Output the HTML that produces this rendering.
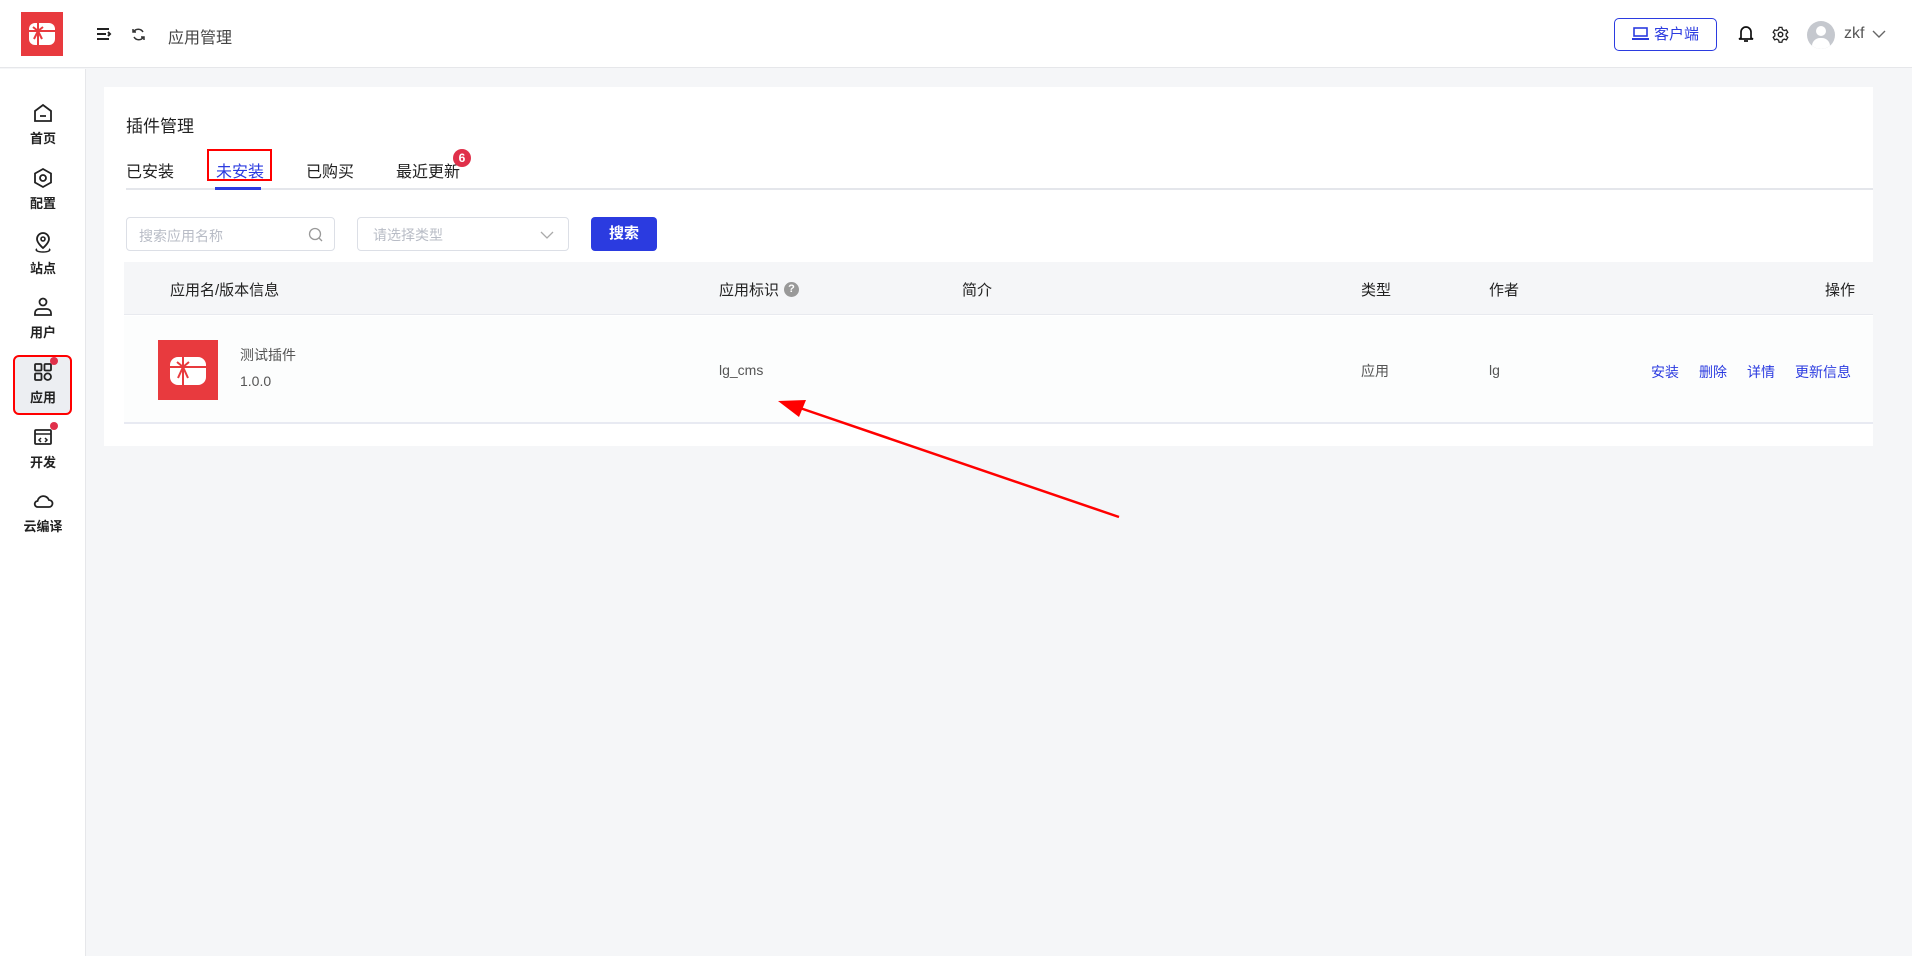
<!DOCTYPE html>
<html><head><meta charset="utf-8"><style>
*{box-sizing:border-box;margin:0;padding:0}
body{width:1912px;height:956px;background:#f5f6f8;font-family:"Liberation Sans","Noto Sans CJK SC",sans-serif;color:#333;position:relative;overflow:hidden}
.abs{position:absolute}
.hdr{left:0;top:0;width:1912px;height:68px;background:#fff;border-bottom:1px solid #e6e7ea}
.side{left:0;top:69px;width:86px;height:887px;background:#fff;border-right:1px solid #e6e7ea}
.si{position:absolute;left:0;width:86px;text-align:center;font-size:13px;font-weight:bold;color:#222}
.si svg{display:block;margin:0 auto 4px}
.card{left:104px;top:87px;width:1769px;height:359px;background:#fff}
.t{position:absolute;white-space:nowrap}
.link{color:#2b3be0;font-size:14px}
</style></head><body>
<div class="abs hdr"></div>
<div class="abs" style="left:21px;top:12px;width:42px;height:44px;background:#e83a3e">
<svg width="42" height="44" viewBox="0 0 42 44"><rect x="8" y="11" width="26" height="22" rx="6" fill="#fff"/><path d="M8 19H34M17 11V33M12 15l5 4 5-4M17 19l-4 8M17 19l4 8" stroke="#e83a3e" stroke-width="2" fill="none"/></svg></div>
<svg class="abs" style="left:96px;top:27px" width="16" height="14"><path d="M1 2h12M1 7h9M1 12h12M12 5l2 2-2 2" stroke="#222" stroke-width="2" fill="none"/></svg>
<svg class="abs" style="left:131px;top:27px" width="15" height="15" viewBox="0 0 15 15"><path d="M12 5A5.5 5.5 0 0 0 2.5 5M3 10a5.5 5.5 0 0 0 9.5 0M2 2v3h3M13 13v-3h-3" stroke="#333" stroke-width="1.5" fill="none"/></svg>
<div class="t" style="left:168px;top:24px;font-size:16px;color:#444">应用管理</div>
<div class="abs" style="left:1614px;top:18px;width:103px;height:33px;border:1px solid #2b3be0;border-radius:5px;color:#2b3be0;font-size:15px;line-height:31px;text-align:center">
<svg width="17" height="13" style="vertical-align:-1px;margin-right:5px"><rect x="2" y="1" width="13" height="8" fill="none" stroke="#2b3be0" stroke-width="1.6"/><path d="M0 12h17" stroke="#2b3be0" stroke-width="2"/></svg>客户端</div>
<svg class="abs" style="left:1737px;top:24px" width="18" height="20" viewBox="0 0 18 20"><path d="M4 14V8a5 5 0 0 1 10 0v6l2 1H2zM7 17h4" stroke="#111" stroke-width="1.7" fill="none"/></svg>
<svg class="abs" style="left:1772px;top:26px" width="17" height="17" viewBox="0 0 24 24"><circle cx="12" cy="12" r="3.2" fill="none" stroke="#222" stroke-width="2"/><path d="M10 2h4l.7 3 2.6 1.5 3-1 2 3.5-2.3 2v3l2.3 2-2 3.5-3-1-2.6 1.5-.7 3h-4l-.7-3-2.6-1.5-3 1-2-3.5 2.3-2v-3l-2.3-2 2-3.5 3 1L9.3 5z" fill="none" stroke="#222" stroke-width="1.8"/></svg>
<div class="abs" style="left:1807px;top:21px;width:28px;height:28px;border-radius:50%;background:#c5c8ce;overflow:hidden"><div class="abs" style="left:9px;top:5px;width:10px;height:10px;border-radius:50%;background:#fff"></div><div class="abs" style="left:5px;top:17px;width:18px;height:14px;border-radius:8px 8px 0 0;background:#fff"></div></div>
<div class="t" style="left:1844px;top:25px;font-size:16px;color:#555">zkf</div>
<svg class="abs" style="left:1872px;top:30px" width="14" height="9"><path d="M1 1l6 6 6-6" stroke="#666" stroke-width="1.4" fill="none"/></svg>

<div class="abs side"></div>
<div class="si" style="top:102px"><svg width="22" height="22" viewBox="0 0 22 22"><path d="M3 9l8-6 8 6v10H3zM8 14h6" fill="none" stroke="#222" stroke-width="1.8"/></svg>首页</div>
<div class="si" style="top:167px"><svg width="22" height="22" viewBox="0 0 22 22"><path d="M11 2l8 4.5v9L11 20l-8-4.5v-9z" fill="none" stroke="#222" stroke-width="1.8"/><circle cx="11" cy="11" r="3" fill="none" stroke="#222" stroke-width="1.8"/></svg>配置</div>
<div class="si" style="top:232px"><svg width="22" height="22" viewBox="0 0 22 22"><path d="M11 16s-6-5-6-9a6 6 0 0 1 12 0c0 4-6 9-6 9z" fill="none" stroke="#222" stroke-width="1.8"/><circle cx="11" cy="7" r="2" fill="none" stroke="#222" stroke-width="1.6"/><path d="M5 17c-2 1 0 3 6 3s8-2 6-3" fill="none" stroke="#222" stroke-width="1.6"/></svg>站点</div>
<div class="si" style="top:296px"><svg width="22" height="22" viewBox="0 0 22 22"><circle cx="11" cy="6" r="3.5" fill="none" stroke="#222" stroke-width="1.8"/><path d="M3 19v-2a4 4 0 0 1 4-4h8a4 4 0 0 1 4 4v2z" fill="none" stroke="#222" stroke-width="1.8"/></svg>用户</div>
<div class="abs" style="left:13px;top:355px;width:59px;height:60px;background:#eceef2;border-radius:6px;border:2px solid #f00"></div>
<div class="si" style="top:361px"><svg width="22" height="22" viewBox="0 0 22 22"><rect x="3" y="3" width="6.5" height="6.5" rx="1" fill="none" stroke="#222" stroke-width="1.8"/><rect x="12.5" y="3" width="6.5" height="6.5" rx="1" fill="none" stroke="#222" stroke-width="1.8"/><rect x="3" y="12.5" width="6.5" height="6.5" rx="1" fill="none" stroke="#222" stroke-width="1.8"/><circle cx="15.7" cy="15.7" r="3.3" fill="none" stroke="#222" stroke-width="1.8"/></svg>应用</div>
<div class="abs" style="left:50px;top:357px;width:8px;height:8px;border-radius:50%;background:#e0304a"></div>
<div class="si" style="top:426px"><svg width="22" height="22" viewBox="0 0 22 22"><rect x="3" y="4" width="16" height="14" rx="1" fill="none" stroke="#222" stroke-width="1.8"/><path d="M3 8h16M9 12l-2 2 2 2M13 12l2 2-2 2" fill="none" stroke="#222" stroke-width="1.5"/></svg>开发</div>
<div class="abs" style="left:50px;top:422px;width:8px;height:8px;border-radius:50%;background:#e0304a"></div>
<div class="si" style="top:490px"><svg width="22" height="22" viewBox="0 0 22 22"><path d="M6 17h11a3.5 3.5 0 0 0 0-7 6 6 0 0 0-11.5 1A3 3 0 0 0 6 17z" fill="none" stroke="#222" stroke-width="1.8"/></svg>云编译</div>

<div class="abs card"></div>
<div class="t" style="left:126px;top:112px;font-size:17px;color:#222">插件管理</div>
<div class="t" style="left:126px;top:158px;font-size:16px;color:#222">已安装</div>
<div class="t" style="left:216px;top:158px;font-size:16px;color:#2b3be0">未安装</div>
<div class="t" style="left:306px;top:158px;font-size:16px;color:#222">已购买</div>
<div class="t" style="left:396px;top:158px;font-size:16px;color:#222">最近更新</div>
<div class="abs" style="left:453px;top:149px;width:18px;height:18px;border-radius:50%;background:#e0304a;color:#fff;font-size:12px;font-weight:bold;text-align:center;line-height:18px">6</div>
<div class="abs" style="left:126px;top:188px;width:1747px;height:2px;background:#e4e6eb"></div>
<div class="abs" style="left:215px;top:187px;width:46px;height:3px;background:#2b3be0"></div>
<div class="abs" style="left:207px;top:149px;width:65px;height:32px;border:2px solid #f00"></div>

<div class="abs" style="left:126px;top:217px;width:209px;height:34px;border:1px solid #dcdfe6;border-radius:4px"></div>
<div class="t" style="left:139px;top:226px;font-size:14px;color:#b8bcc6">搜索应用名称</div>
<svg class="abs" style="left:308px;top:227px" width="16" height="16"><circle cx="7" cy="7" r="5.5" fill="none" stroke="#999" stroke-width="1.3"/><path d="M11 11l3 3" stroke="#999" stroke-width="1.3"/></svg>
<div class="abs" style="left:357px;top:217px;width:212px;height:34px;border:1px solid #dcdfe6;border-radius:4px"></div>
<div class="t" style="left:373px;top:225px;font-size:14px;color:#b8bcc6">请选择类型</div>
<svg class="abs" style="left:540px;top:231px" width="14" height="9"><path d="M1 1l6 6 6-6" stroke="#aaa" stroke-width="1.3" fill="none"/></svg>
<div class="abs" style="left:591px;top:217px;width:66px;height:34px;background:#2b3be0;border-radius:4px;color:#fff;font-size:15px;font-weight:bold;text-align:center;line-height:34px">搜索</div>

<div class="abs" style="left:124px;top:262px;width:1749px;height:53px;background:#f5f6f8;border-bottom:1px solid #e8eaef"></div>
<div class="t" style="left:170px;top:279px;font-size:15px;color:#222">应用名/版本信息</div>
<div class="t" style="left:719px;top:279px;font-size:15px;color:#222">应用标识</div>
<div class="abs" style="left:784px;top:282px;width:15px;height:15px;border-radius:50%;background:#999;color:#fff;font-size:11px;font-weight:bold;text-align:center;line-height:15px">?</div>
<div class="t" style="left:962px;top:279px;font-size:15px;color:#222">简介</div>
<div class="t" style="left:1361px;top:279px;font-size:15px;color:#222">类型</div>
<div class="t" style="left:1489px;top:279px;font-size:15px;color:#222">作者</div>
<div class="t" style="left:1825px;top:279px;font-size:15px;color:#222">操作</div>

<div class="abs" style="left:124px;top:316px;width:1749px;height:108px;background:#fcfdfd;border-bottom:2px solid #e8eaf2"></div>
<div class="abs" style="left:158px;top:340px;width:60px;height:60px;background:#e83a3e">
<svg width="60" height="60" viewBox="0 0 60 60"><rect x="12" y="17" width="36" height="28" rx="8" fill="#fff"/><path d="M12 27H48M25 17V45M19 22l6 5 6-5M25 27l-5 11M25 27l5 11" stroke="#e83a3e" stroke-width="2" fill="none"/></svg></div>
<div class="t" style="left:240px;top:345px;font-size:14px;color:#555">测试插件</div>
<div class="t" style="left:240px;top:373px;font-size:14px;color:#555">1.0.0</div>
<div class="t" style="left:719px;top:362px;font-size:14px;color:#555">lg_cms</div>
<div class="t" style="left:1361px;top:361px;font-size:14px;color:#555">应用</div>
<div class="t" style="left:1489px;top:362px;font-size:14px;color:#555">lg</div>
<div class="t link" style="left:1651px;top:362px">安装</div>
<div class="t link" style="left:1699px;top:362px">删除</div>
<div class="t link" style="left:1747px;top:362px">详情</div>
<div class="t link" style="left:1795px;top:362px">更新信息</div>

<svg class="abs" style="left:0;top:0" width="1912" height="956"><path d="M1119 517L800 408" stroke="#f00" stroke-width="2.5"/><path d="M778 401l28 -1l-7 17z" fill="#f00"/></svg>
</body></html>
